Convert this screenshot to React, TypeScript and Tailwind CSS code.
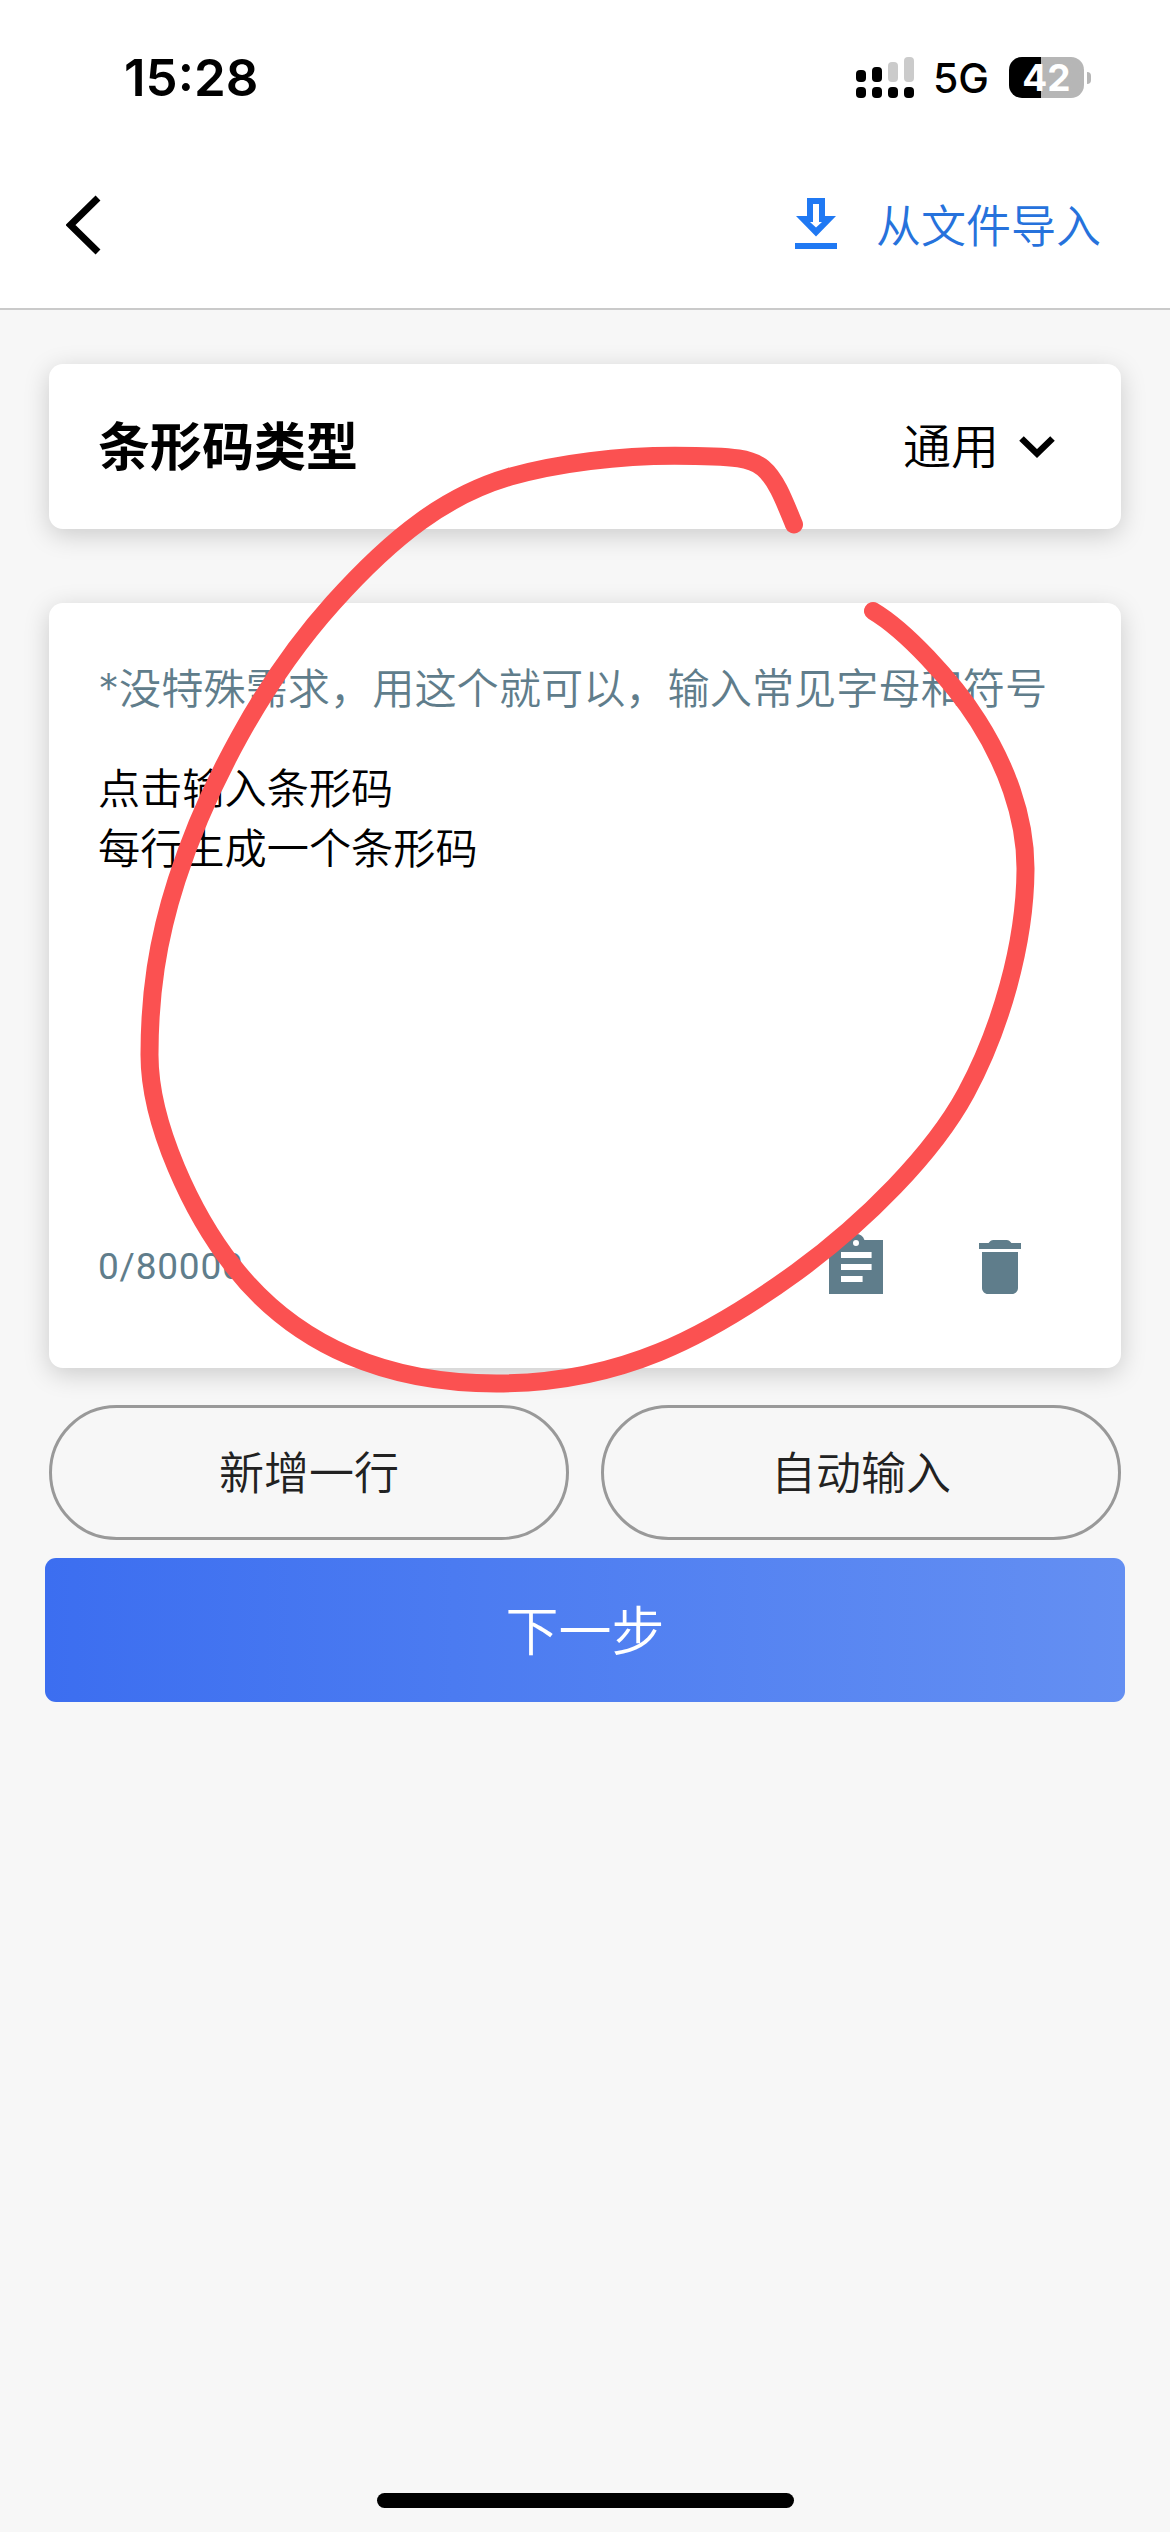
const CJK = "font-['Inter','Noto_Sans_CJK_SC',sans-serif]";

// Centre line of the hand-drawn loop, one curve per line.
const LOOP = [
  'M873 611',
  'C905 630 952 680 978 721',
  'C1004 762 1026 815 1025.500 870',
  'C1025 945 1000 1030 966 1093',
  'C933 1154 865 1222 796.700 1272',
  'C707 1337 620 1383.500 496.700 1383.500',
  'C390 1383.500 297 1348 233 1266',
  'C193 1215 149.500 1125 149.500 1055',
  'C149.500 995 157 941 176.700 880',
  'C206 789 262 682 333 603',
  'C394 535 447 495 510 476.700',
  'C558 463 620 455.700 674.500 455.700',
  'C738 455.700 752 459 763 468',
  'C776 479 784 500 794 524.500',
].join(' ');

function StatusBar() {
  return (
    <div className="flex h-[155px] items-center justify-between pl-[124px] pr-[79px] font-['Inter',sans-serif]">
      <div className="text-[51px] leading-[60px] font-semibold">15:28</div>
      <div className="flex items-center">
        <svg width="58" height="41" viewBox="0 0 58 41">
          <rect x="0" y="13" width="10" height="12" rx="4" />
          <rect x="16" y="10" width="10" height="15" rx="4" />
          <rect x="32" y="5" width="10" height="20" rx="4" fill="#cbcbcb" />
          <rect x="48" y="0" width="10" height="25" rx="4" fill="#cbcbcb" />
          <rect x="0" y="30" width="10" height="11" rx="4" />
          <rect x="16" y="30" width="10" height="11" rx="4" />
          <rect x="32" y="30" width="10" height="11" rx="4" />
          <rect x="48" y="30" width="10" height="11" rx="4" />
        </svg>
        <span className="ml-[19px] w-[76px] pt-[2px] text-[41px] leading-[41px] font-medium">5G</span>
        <div className="flex h-[41px] w-[75px] items-center justify-center rounded-[13px] bg-linear-to-r from-black from-[43%] to-[#b6b6b6] to-[43%] text-[37px] leading-[41px] font-bold text-white">
          42
        </div>
        <div className="ml-[3px] h-[12px] w-[4px] rounded-r-full bg-[#b6b6b6]" />
      </div>
    </div>
  );
}

function NavBar() {
  return (
    <div className="flex h-[154px] items-center justify-between pr-[69px] pb-[14px] pl-[66px]">
      <svg width="36" height="60" viewBox="0 0 36 60" fill="none" stroke="#000" strokeWidth="7">
        <path d="M32 3L4.5 30L32 57" />
      </svg>
      <div className="flex items-center text-[#2672dc]">
        <svg width="42" height="51" viewBox="0 0 42 51" fill="#2079f3" className="mr-[39px] mb-[3px]">
          <path fillRule="evenodd" d="M12 0h18v18h11L21 38.500L1 18h11zM18 6v18h-3l6 5.500l6-5.500h-3V6z" />
          <path d="M0 45h42v6H0z" />
        </svg>
        <span className="pt-[3px] text-[45px] leading-[60px] font-[350]">从文件导入</span>
      </div>
    </div>
  );
}

export default function App() {
  return (
    <div className={`relative flex h-[2532px] w-[1170px] flex-col overflow-hidden bg-[#f7f7f7] text-black ${CJK}`}>
      <header className="h-[310px] border-b-2 border-[#cacaca] bg-white">
        <StatusBar />
        <NavBar />
      </header>

      <main className="flex flex-col px-[45px] pt-[54px]">
        <section className="mx-1 flex h-[165px] items-center justify-between rounded-[14px] bg-white pr-[66px] pl-[49px] shadow-[0_6px_26px_rgba(0,0,0,0.18)]">
          <h1 className="pt-[3px] text-[52px] leading-[70px] font-bold">条形码类型</h1>
          <div className="flex items-center">
            <span className="text-[48px] leading-[64px] font-[350]">通用</span>
            <svg width="36" height="22" viewBox="0 0 36 22" fill="none" stroke="#000" strokeWidth="6.500" className="ml-[20px]">
              <path d="M2.500 2.500L18 17.500L33.500 2.500" />
            </svg>
          </div>
        </section>

        <section className="mx-1 mt-[74px] flex h-[765px] flex-col rounded-[14px] bg-white px-[49px] pt-[55px] shadow-[0_6px_26px_rgba(0,0,0,0.18)]">
          <p className="text-[42.200px] leading-[62px] font-[350] whitespace-nowrap text-[#607d8b]">*没特殊需求，用这个就可以，输入常见字母和符号</p>
          <div className="mt-[39px] h-[472px] text-[42.200px] leading-[60px] font-[350]">
            <p>点击输入条形码</p>
            <p>每行生成一个条形码</p>
          </div>
          <div className="flex h-[72px] items-center justify-between pr-[36px]">
            <span className="font-['Roboto',sans-serif] text-[37px] leading-[44px] tracking-[0.800px] text-[#607d8b]">0/80000</span>
            <div className="flex gap-[72px] fill-[#5f7d8b]">
              <svg width="72" height="72" viewBox="0 0 24 24">
                <path fillRule="evenodd" d="M3 3h6.180a3 3 0 0 1 5.640 0H21v18H3zM12 3a1 1 0 1 0 0 2a1 1 0 0 0 0-2zM7 7v2h10.200V7zM7 11v2h10.200v-2zM7 15v2h7.200v-2z" />
              </svg>
              <svg width="72" height="72" viewBox="0 0 24 24">
                <path d="M6 19c0 1.100.9 2 2 2h8c1.100 0 2-.9 2-2V7H6zM19 4h-3.200c-.5-.6-.9-1-1.600-1h-4.400c-.7 0-1.100.4-1.600 1H5v2h14z" />
              </svg>
            </div>
          </div>
        </section>

        <div className="mx-1 mt-[37px] grid grid-cols-2 gap-[32px] text-[45px] font-[350] text-[#222]">
          <button className="h-[135px] rounded-full border-3 border-[#999] pt-[2px]">新增一行</button>
          <button className="h-[135px] rounded-full border-3 border-[#999] pt-[2px]">自动输入</button>
        </div>

        <button className="mt-[18px] h-[144px] rounded-[11px] bg-linear-to-r from-[#3c6ef0] to-[#648ff2] pt-[5px] text-[53px] font-[350] text-white">
          下一步
        </button>
      </main>

      <div className="mt-auto mb-[24px] h-[15px] w-[417px] self-center rounded-full bg-black" />

      <svg className="pointer-events-none absolute inset-0" width="1170" height="2532" viewBox="0 0 1170 2532" fill="none">
        <path d={LOOP} stroke="#fb5151" strokeWidth="18" strokeLinecap="round" strokeLinejoin="round" />
      </svg>
    </div>
  );
}
